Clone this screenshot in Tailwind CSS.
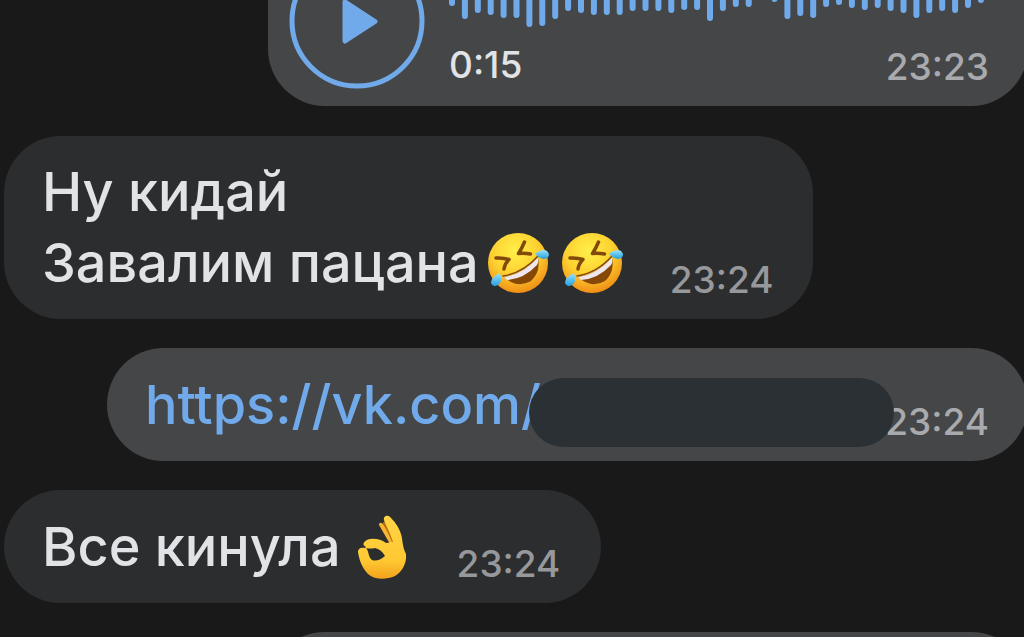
<!DOCTYPE html>
<html lang="ru">
<head>
<meta charset="utf-8">
<meta name="viewport" content="width=device-width, initial-scale=1">
<title>Чат</title>
<script src="https://cdn.jsdelivr.net/npm/@tailwindcss/browser@4"></script>
</head>
<body class="bg-[#19191a] font-['Inter','Noto_Sans',sans-serif] font-medium text-[#e1e3e6]">
<svg class="absolute size-0" aria-hidden="true">
  <defs>
    <radialGradient id="face" cx="45%" cy="30%" r="72%">
      <stop offset="0" stop-color="#fff04a"/><stop offset=".55" stop-color="#fdd02f"/><stop offset="1" stop-color="#ef8a14"/>
    </radialGradient>
    <linearGradient id="tear" x1="0" y1="0" x2="0" y2="1">
      <stop offset="0" stop-color="#9be2fb"/><stop offset="1" stop-color="#259fe0"/>
    </linearGradient>
    <linearGradient id="skin" x1="0" y1="0" x2="0" y2="1">
      <stop offset="0" stop-color="#ffd544"/><stop offset=".7" stop-color="#ffc933"/><stop offset="1" stop-color="#f3a21c"/>
    </linearGradient>
    <symbol id="rofl" viewBox="0 0 64 64">
      <circle cx="32" cy="32" r="30" fill="url(#face)"/>
      <path d="M10 27 Q17 26.500 23 28.500 Q19 32 18 38" fill="none" stroke="#83490b" stroke-width="3.500" stroke-linecap="round" stroke-linejoin="round"/>
      <path d="M38.500 11 Q36 17 32.500 22.500 Q39 22 44.500 23" fill="none" stroke="#83490b" stroke-width="3.500" stroke-linecap="round" stroke-linejoin="round"/>
      <path d="M18 46 Q38 43 52 26 Q55 41 45 50 Q31 58 18 46Z" fill="#854806"/>
      <path d="M18 46 Q38 43 52 26 Q53 31 51 34 Q38 48 21 49Z" fill="#eee8ee"/>
      <path d="M17 45 Q37 42 52 25" fill="none" stroke="#854806" stroke-width="1.500" stroke-linecap="round"/>
      <path d="M49 23 Q56 17 61 20 Q65 24 61 27 Q56 30 49 23Z" fill="url(#tear)"/>
      <path d="M14 42 Q5 46 5 52 Q7 57 12 54 Q17 51 14 42Z" fill="url(#tear)"/>
    </symbol>
    <symbol id="ok-hand" viewBox="0 0 52 66">
      <path d="M22 11 Q22 7 26 10 L35 20 L39 32 L33 30Z" fill="#f5b52f"/>
      <path d="M27 9 Q32 17 36 27" fill="none" stroke="#b9690e" stroke-width="2.500" stroke-linecap="round"/>
      <path fill="url(#skin)" fill-rule="evenodd" d="M27 6 C26 2 31 0 34 4 Q41 11 44 20 C46 27 45 32 49 40 C50 49 45 58 38 62 C29 66 18 66 11 60 C5 54 2 45 1 38 C1 34 5 33 8 34 L9 33 C4 31 7 26 13 25 Q22 24 29 29 L36 28 Q33 19 28 9Z M9 34 C12 37 11 43 15 46 Q21 48 28 42 Q24 35 18 34 Q12 35 9 34Z"/>
    </symbol>
  </defs>
</svg>

<main class="flex h-screen flex-col gap-[29px] overflow-hidden pl-1">

  <article class="-mt-[76px] -mr-1 ml-[264px] flex h-[182px] shrink-0 items-end rounded-[57px] bg-[#454647] pr-[39px] pl-[21px]">
    <button type="button" aria-label="Воспроизвести" class="mb-[17px] shrink-0">
      <svg class="block size-[136px]" viewBox="0 0 136 136">
        <circle cx="68" cy="68" r="65" fill="none" stroke="#71aaeb" stroke-width="5"/>
        <path d="M56 49 L86 68.500 L56 88Z" fill="#71aaeb" stroke="#71aaeb" stroke-width="5" stroke-linejoin="round"/>
      </svg>
    </button>
    <div class="ml-6 flex grow flex-col pb-[17px]">
      <svg class="h-[68px] w-[540px]" viewBox="0 0 540 68" role="img" aria-label="Голосовое сообщение">
        <path fill="none" stroke="#71aaeb" stroke-width="6" stroke-linecap="round" d="M3 22V44M15.900 22V57M28.800 22V51M41.700 22V53M54.600 22V56M67.500 22V56M80.400 22V65M93.300 22V64M106.200 22V57M119.100 22V49M132 22V51M144.900 22V53M157.800 22V53M170.700 22V53M183.600 22V49M196.500 22V49M209.400 22V49M222.300 22V51M235.200 22V48M248.100 22V48M261 22V59M273.900 22V49M286.800 22V45M299.700 22V45M325.500 30V40M338.400 22V57M351.300 22V54M364.200 22V56M377.100 22V45M390 22V43M402.900 22V46M415.800 22V48M428.700 22V46M441.600 22V49M454.500 22V51M467.400 22V56M480.300 22V51M493.200 22V49M506.100 22V51M519 22V46M531.900 22V41"/>
      </svg>
      <div class="mt-4 flex items-end justify-between text-[37px]/[44px]">
        <span class="mb-0.5">0:15</span>
        <time class="text-[#a9aaad]">23:23</time>
      </div>
    </div>
  </article>

  <article class="mt-px flex shrink-0 items-end gap-[46px] self-start rounded-[57px] bg-[#2c2d2e] pt-5 pr-10 pb-[17px] pl-[38px]">
    <p class="mb-1 text-[54px]/[71px]">Ну кидай<br><span class="flex items-center">Завалим пацана<svg class="ml-[7px] size-16" role="img" aria-label="🤣"><use href="#rofl"/></svg><svg class="ml-[10px] size-16" role="img" aria-label="🤣"><use href="#rofl"/></svg></span></p>
    <time class="text-[37px]/[44px] text-[#97989b]">23:24</time>
  </article>

  <article class="relative -mr-1 ml-[103px] flex min-h-[113px] shrink-0 items-end justify-between rounded-full bg-[#454647] pt-5 pr-[39px] pb-[17px] pl-[38px]">
    <a href="https://vk.com/" class="mb-1 text-[54px]/[71px] text-[#71aaeb]">https://vk.com/</a>
    <time class="text-[37px]/[44px] text-[#a9aaad]">23:24</time>
    <span class="absolute top-[30px] right-[134px] left-[422px] h-[69px] rounded-full bg-[#2b3034]"></span>
  </article>

  <article class="flex min-h-[113px] shrink-0 items-end gap-12 self-start rounded-full bg-[#2c2d2e] pt-5 pr-[41px] pb-[17px] pl-[38px]">
    <p class="mb-1 flex items-center text-[54px]/[71px]">Все кинула<svg class="ml-4 h-[66px] w-[52px]" role="img" aria-label="👌"><use href="#ok-hand"/></svg></p>
    <time class="text-[37px]/[44px] text-[#97989b]">23:24</time>
  </article>

  <article class="-mr-1 ml-[264px] h-[113px] shrink-0 rounded-[57px] bg-[#454647]"></article>
</main>
</body>
</html>
